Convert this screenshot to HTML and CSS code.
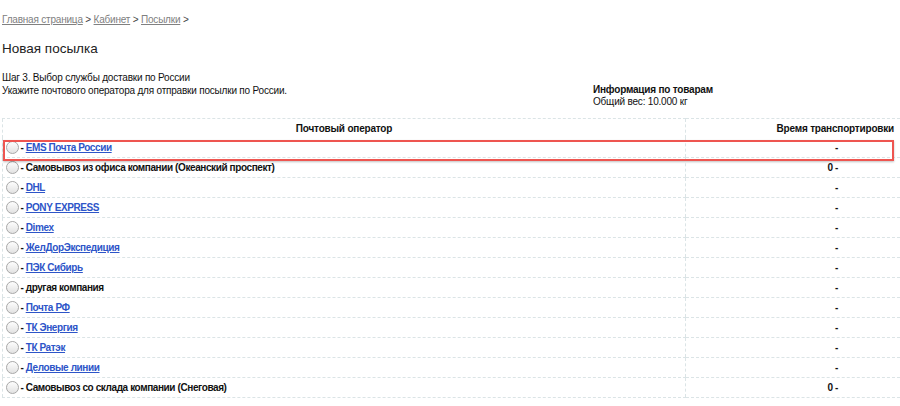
FILE: index.html
```
<!DOCTYPE html>
<html lang="ru">
  <head>
    <meta charset="UTF-8" />
    <title>Новая посылка</title>
    <link rel="stylesheet" href="styles.css">
  </head>
  <body>
    <div class="crumbs">
      <a href="#">Главная страница</a> &gt; <a href="#">Кабинет</a> &gt; <a href="#">Посылки</a> &gt;
    </div>

    <h1>Новая посылка</h1>

    <div class="intro">
      <div class="step">
        <div>Шаг 3. Выбор службы доставки по России</div>
        <div>Укажите почтового оператора для отправки посылки по России.</div>
      </div>
      <div class="info">
        <div class="info-title">Информация по товарам</div>
        <div>Общий вес: 10.000 кг</div>
      </div>
    </div>

    <div class="table-wrap">
      <table class="operators">
        <tr>
          <th class="col-name">Почтовый оператор</th>
          <th class="col-time">Время транспортировки</th>
        </tr>
        <tr>
          <td><span class="radio"></span> - <a href="#">EMS Почта России</a></td>
          <td class="time">-</td>
        </tr>
        <tr>
          <td><span class="radio"></span> - Самовывоз из офиса компании (Океанский проспект)</td>
          <td class="time">0 -</td>
        </tr>
        <tr>
          <td><span class="radio"></span> - <a href="#">DHL</a></td>
          <td class="time">-</td>
        </tr>
        <tr>
          <td><span class="radio"></span> - <a href="#">PONY EXPRESS</a></td>
          <td class="time">-</td>
        </tr>
        <tr>
          <td><span class="radio"></span> - <a href="#">Dimex</a></td>
          <td class="time">-</td>
        </tr>
        <tr>
          <td><span class="radio"></span> - <a href="#">ЖелДорЭкспедиция</a></td>
          <td class="time">-</td>
        </tr>
        <tr>
          <td><span class="radio"></span> - <a href="#">ПЭК Сибирь</a></td>
          <td class="time">-</td>
        </tr>
        <tr>
          <td><span class="radio"></span> - другая компания</td>
          <td class="time">-</td>
        </tr>
        <tr>
          <td><span class="radio"></span> - <a href="#">Почта РФ</a></td>
          <td class="time">-</td>
        </tr>
        <tr>
          <td><span class="radio"></span> - <a href="#">ТК Энергия</a></td>
          <td class="time">-</td>
        </tr>
        <tr>
          <td><span class="radio"></span> - <a href="#">ТК Ратэк</a></td>
          <td class="time">-</td>
        </tr>
        <tr>
          <td><span class="radio"></span> - <a href="#">Деловые линии</a></td>
          <td class="time">-</td>
        </tr>
        <tr>
          <td><span class="radio"></span> - Самовывоз со склада компании (Снеговая)</td>
          <td class="time">0 -</td>
        </tr>
      </table>
      <div class="highlight"></div>
    </div>
  </body>
</html>
```

FILE: styles.css
```
/* Shipping step page */
body {
  margin: 0;
  padding: 0 0 0 2px;
  font-family: "Liberation Sans", Arial, sans-serif;
  font-size: 10px;
  letter-spacing: -0.2px;
  color: #111;
  background: #fff;
}

.crumbs {
  padding-top: 14px;
  color: #444;
  line-height: 12px;
}

.crumbs a {
  color: #808080;
}

h1 {
  margin: 13px 0 0;
  font-size: 13.5px;
  font-weight: normal;
  letter-spacing: 0;
  line-height: 20px;
  color: #222;
}

.intro {
  display: flex;
  margin-top: 12px;
  line-height: 13px;
}

.step {
  width: 591px;
}

.info {
  padding-top: 13px;
  line-height: 12px;
}

.info-title {
  font-weight: bold;
}

.table-wrap {
  position: relative;
  margin-top: 10px;
}

.operators {
  width: 898px;
  border-collapse: collapse;
  border-left: 1px dashed #dbe4e6;
  font-weight: bold;
  letter-spacing: -0.4px;
}

.operators th {
  height: 19px;
  padding: 0 6px;
  border-top: 1px dashed #dbe4e6;
  color: #111;
  letter-spacing: -0.2px;
}

.operators .col-name {
  width: 670px;
  text-align: center;
}

.operators .col-time {
  text-align: right;
}

.operators td {
  height: 19px;
  padding: 0 3px;
  border-bottom: 1px dashed #dbe4e6;
  white-space: nowrap;
}

.operators td + td,
.operators th + th {
  border-left: 1px dashed #dbe4e6;
}

.operators .time {
  text-align: right;
  padding-right: 62px;
}

.operators a {
  color: #2d55c8;
}

.radio {
  display: inline-block;
  width: 11px;
  height: 11px;
  margin-right: -1px;
  border: 1px solid #a8a8a8;
  border-radius: 50%;
  background: linear-gradient(#fdfdfd, #e2e2e2);
  vertical-align: -3px;
}

.highlight {
  position: absolute;
  left: 1px;
  top: 22px;
  width: 887px;
  height: 17px;
  border: 2px solid #ee5550;
  box-shadow: 0 1px 2px rgba(0, 0, 0, 0.25);
}
```
